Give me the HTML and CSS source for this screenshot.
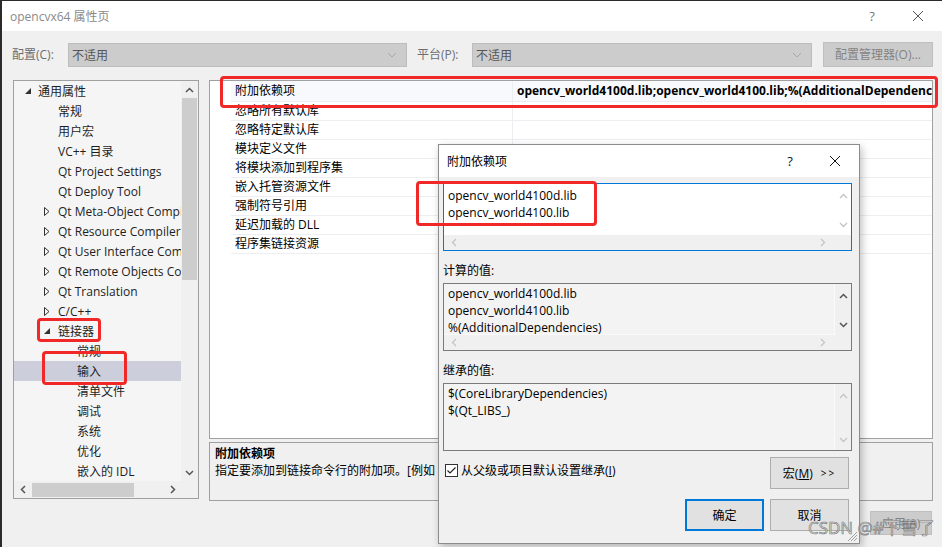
FILE: index.html
```html
<!DOCTYPE html>
<html lang="zh-CN">
<head>
  <meta charset="UTF-8">
  <title>opencvx64 属性页</title>
  <link rel="stylesheet" href="styles.css">
</head>
<body>
  <div class="window">
    <div class="titlebar">
      <span class="title">opencvx64 属性页</span>
      <span class="cap-btn help">?</span>
      <span class="cap-btn close">
        <svg width="12" height="12" viewBox="0 0 12 12"><path d="M1 1L11 11M11 1L1 11" stroke="#555" stroke-width="1"/></svg>
      </span>
    </div>

    <!-- configuration / platform row -->
    <div class="config-row">
      <span class="cfg-label">配置(C):</span>
      <div class="combo combo-cfg">
        <span>不适用</span>
        <svg class="combo-arrow" width="10" height="6" viewBox="0 0 10 6"><path d="M1 1L5 5L9 1" fill="none" stroke="#a8a8a8"/></svg>
      </div>
      <span class="cfg-label plat">平台(P):</span>
      <div class="combo combo-plat">
        <span>不适用</span>
        <svg class="combo-arrow" width="10" height="6" viewBox="0 0 10 6"><path d="M1 1L5 5L9 1" fill="none" stroke="#a8a8a8"/></svg>
      </div>
      <button class="btn btn-disabled cfg-mgr">配置管理器(O)...</button>
    </div>

    <div class="main">
      <!-- category tree -->
      <div class="tree">
        <div class="tree-items">
          <div class="node l0"><span class="exp"><svg width="6" height="6" viewBox="0 0 6 6"><path d="M6 0V6H0Z" fill="#333"/></svg></span><span class="label">通用属性</span></div>
          <div class="node l1"><span class="exp"></span><span class="label">常规</span></div>
          <div class="node l1"><span class="exp"></span><span class="label">用户宏</span></div>
          <div class="node l1"><span class="exp"></span><span class="label">VC++ 目录</span></div>
          <div class="node l1"><span class="exp"></span><span class="label">Qt Project Settings</span></div>
          <div class="node l1"><span class="exp"></span><span class="label">Qt Deploy Tool</span></div>
          <div class="node l1"><span class="exp"><svg width="6" height="9" viewBox="0 0 6 9"><path d="M0.5 0.5V8.5L5 4.5Z" fill="none" stroke="#333"/></svg></span><span class="label">Qt Meta-Object Compiler</span></div>
          <div class="node l1"><span class="exp"><svg width="6" height="9" viewBox="0 0 6 9"><path d="M0.5 0.5V8.5L5 4.5Z" fill="none" stroke="#333"/></svg></span><span class="label">Qt Resource Compiler</span></div>
          <div class="node l1"><span class="exp"><svg width="6" height="9" viewBox="0 0 6 9"><path d="M0.5 0.5V8.5L5 4.5Z" fill="none" stroke="#333"/></svg></span><span class="label">Qt User Interface Compiler</span></div>
          <div class="node l1"><span class="exp"><svg width="6" height="9" viewBox="0 0 6 9"><path d="M0.5 0.5V8.5L5 4.5Z" fill="none" stroke="#333"/></svg></span><span class="label">Qt Remote Objects Compiler</span></div>
          <div class="node l1"><span class="exp"><svg width="6" height="9" viewBox="0 0 6 9"><path d="M0.5 0.5V8.5L5 4.5Z" fill="none" stroke="#333"/></svg></span><span class="label">Qt Translation</span></div>
          <div class="node l1"><span class="exp"><svg width="6" height="9" viewBox="0 0 6 9"><path d="M0.5 0.5V8.5L5 4.5Z" fill="none" stroke="#333"/></svg></span><span class="label">C/C++</span></div>
          <div class="node l1"><span class="exp"><svg width="6" height="6" viewBox="0 0 6 6"><path d="M6 0V6H0Z" fill="#333"/></svg></span><span class="label">链接器</span></div>
          <div class="node l2"><span class="exp"></span><span class="label">常规</span></div>
          <div class="node l2 selected"><span class="exp"></span><span class="label">输入</span></div>
          <div class="node l2"><span class="exp"></span><span class="label">清单文件</span></div>
          <div class="node l2"><span class="exp"></span><span class="label">调试</span></div>
          <div class="node l2"><span class="exp"></span><span class="label">系统</span></div>
          <div class="node l2"><span class="exp"></span><span class="label">优化</span></div>
          <div class="node l2"><span class="exp"></span><span class="label">嵌入的 IDL</span></div>
        </div>
        <div class="vscroll">
          <div class="sb-btn"><svg width="9" height="6" viewBox="0 0 9 6"><path d="M1 5L4.5 1.5L8 5" fill="none" stroke="#555" stroke-width="1.5"/></svg></div>
          <div class="v-thumb"></div>
          <div class="sb-fill"></div>
          <div class="sb-btn"><svg width="9" height="6" viewBox="0 0 9 6"><path d="M1 1L4.5 4.5L8 1" fill="none" stroke="#555" stroke-width="1.5"/></svg></div>
        </div>
        <div class="hscroll">
          <div class="sb-btn"><svg width="6" height="9" viewBox="0 0 6 9"><path d="M5 1L1.5 4.5L5 8" fill="none" stroke="#555" stroke-width="1.5"/></svg></div>
          <div class="h-thumb"></div>
          <div class="sb-fill"></div>
          <div class="sb-btn"><svg width="6" height="9" viewBox="0 0 6 9"><path d="M1 1L4.5 4.5L1 8" fill="none" stroke="#555" stroke-width="1.5"/></svg></div>
        </div>
        <div class="corner"></div>
      </div>

      <div class="right-col">
        <!-- property grid -->
        <div class="propgrid">
          <div class="pg-row first">
            <div class="pg-name">附加依赖项</div>
            <div class="pg-val strong">opencv_world4100d.lib;opencv_world4100.lib;%(AdditionalDependencies)</div>
          </div>
          <div class="pg-row"><div class="pg-name">忽略所有默认库</div><div class="pg-val"></div></div>
          <div class="pg-row"><div class="pg-name">忽略特定默认库</div><div class="pg-val"></div></div>
          <div class="pg-row"><div class="pg-name">模块定义文件</div><div class="pg-val"></div></div>
          <div class="pg-row"><div class="pg-name">将模块添加到程序集</div><div class="pg-val"></div></div>
          <div class="pg-row"><div class="pg-name">嵌入托管资源文件</div><div class="pg-val"></div></div>
          <div class="pg-row"><div class="pg-name">强制符号引用</div><div class="pg-val"></div></div>
          <div class="pg-row"><div class="pg-name">延迟加载的 DLL</div><div class="pg-val"></div></div>
          <div class="pg-row"><div class="pg-name">程序集链接资源</div><div class="pg-val"></div></div>
        </div>
        <div class="desc">
          <div class="desc-title">附加依赖项</div>
          <div class="desc-text">指定要添加到链接命令行的附加项。[例如 kernel32.lib]</div>
        </div>
      </div>
    </div>

    <div class="footer">
      <button class="btn btn-disabled apply">应用(A)</button>
    </div>
  </div>

  <!-- edit dialog -->
  <div class="dialog">
    <div class="dlg-title">
      <span class="title-text">附加依赖项</span>
      <span class="cap-btn help dark">?</span>
      <span class="cap-btn close">
        <svg width="12" height="12" viewBox="0 0 12 12"><path d="M1 1L11 11M11 1L1 11" stroke="#111" stroke-width="1"/></svg>
      </span>
    </div>
    <div class="dlg-body">
      <div class="tbox focus">
        <div class="tb-text">
          <div>opencv_world4100d.lib</div>
          <div>opencv_world4100.lib</div>
        </div>
        <div class="tb-vs">
          <svg width="9" height="6" viewBox="0 0 9 6"><path d="M1 5L4.5 1.5L8 5" fill="none" stroke="#c4c4c4" stroke-width="1.3"/></svg>
          <svg width="9" height="6" viewBox="0 0 9 6"><path d="M1 1L4.5 4.5L8 1" fill="none" stroke="#c4c4c4" stroke-width="1.3"/></svg>
        </div>
        <div class="tb-hs">
          <svg width="6" height="9" viewBox="0 0 6 9"><path d="M5 1L1.5 4.5L5 8" fill="none" stroke="#c4c4c4" stroke-width="1.3"/></svg>
          <svg width="6" height="9" viewBox="0 0 6 9"><path d="M1 1L4.5 4.5L1 8" fill="none" stroke="#c4c4c4" stroke-width="1.3"/></svg>
        </div>
      </div>

      <div class="sec-label">计算的值:</div>
      <div class="tbox readonly">
        <div class="tb-text">
          <div>opencv_world4100d.lib</div>
          <div>opencv_world4100.lib</div>
          <div>%(AdditionalDependencies)</div>
        </div>
        <div class="tb-vs">
          <svg width="9" height="6" viewBox="0 0 9 6"><path d="M1 5L4.5 1.5L8 5" fill="none" stroke="#555" stroke-width="1.5"/></svg>
          <svg width="9" height="6" viewBox="0 0 9 6"><path d="M1 1L4.5 4.5L8 1" fill="none" stroke="#555" stroke-width="1.5"/></svg>
        </div>
        <div class="tb-hs">
          <svg width="6" height="9" viewBox="0 0 6 9"><path d="M5 1L1.5 4.5L5 8" fill="none" stroke="#c4c4c4" stroke-width="1.3"/></svg>
          <svg width="6" height="9" viewBox="0 0 6 9"><path d="M1 1L4.5 4.5L1 8" fill="none" stroke="#c4c4c4" stroke-width="1.3"/></svg>
        </div>
      </div>

      <div class="sec-label">继承的值:</div>
      <div class="tbox readonly no-hs">
        <div class="tb-text">
          <div>$(CoreLibraryDependencies)</div>
          <div>$(Qt_LIBS_)</div>
        </div>
        <div class="tb-vs">
          <svg width="9" height="6" viewBox="0 0 9 6"><path d="M1 5L4.5 1.5L8 5" fill="none" stroke="#c4c4c4" stroke-width="1.3"/></svg>
          <svg width="9" height="6" viewBox="0 0 9 6"><path d="M1 1L4.5 4.5L8 1" fill="none" stroke="#c4c4c4" stroke-width="1.3"/></svg>
        </div>
      </div>

      <div class="opt-row">
        <label class="check">
          <svg width="13" height="13" viewBox="0 0 13 13"><rect x="0.5" y="0.5" width="12" height="12" fill="#fff" stroke="#333"/><path d="M2.5 6.5L5 9L10.5 3.5" fill="none" stroke="#222" stroke-width="1.2"/></svg>
          <span>从父级或项目默认设置继承(<u>I</u>)</span>
        </label>
        <button class="btn macro">宏(<u>M</u>)<span class="gt">&gt;&gt;</span></button>
      </div>

      <div class="btn-row">
        <button class="btn ok">确定</button>
        <button class="btn">取消</button>
      </div>
    </div>
    <svg class="grip" width="10" height="10" viewBox="0 0 10 10"><path d="M9 3L3 9M9 6L6 9M9 0L0 9" stroke="#a0a0a0" stroke-width="1"/></svg>
  </div>

  <!-- annotation marks -->
  <div class="mark mark-row"></div>
  <div class="mark mark-linker"></div>
  <div class="mark mark-input"></div>
  <div class="mark mark-libs"></div>

  <div class="watermark">CSDN @#下雪了</div>
</body>
</html>
```

FILE: styles.css
```css
/* Base */
* {
  box-sizing: border-box;
}

html, body {
  margin: 0;
}

body {
  position: relative;
  width: 942px;
  height: 547px;
  overflow: hidden;
  background: #2b2b2b;
  font-family: "Open Sans", "Noto Sans CJK SC", sans-serif;
  font-size: 12px;
  line-height: 17px;
  color: #000;
}

button {
  font: inherit;
  color: inherit;
}

.window {
  display: flex;
  flex-direction: column;
  height: 546px;
  margin: 1px 0 0 2px;
  background: #f0f0f0;
}

/* Title bar */
.titlebar {
  display: flex;
  align-items: center;
  height: 30px;
  background: #fff;
}

.title {
  padding-left: 8px;
  color: #8a8a8a;
}

.cap-btn {
  display: flex;
  align-items: center;
  justify-content: center;
  width: 46px;
  height: 30px;
}

.cap-btn.help {
  margin-left: auto;
  color: #777;
  font-size: 13px;
}

.cap-btn.help.dark {
  color: #111;
}

.cap-btn.close {
  margin-right: 1px;
}

/* Config row */
.config-row {
  display: flex;
  align-items: flex-start;
  height: 49px;
  padding: 12px 0 0 10px;
}

.cfg-label {
  width: 56px;
  line-height: 24px;
  color: #6d6d6d;
}

.cfg-label.plat {
  width: 55px;
  margin-left: 10px;
}

.combo {
  display: flex;
  align-items: center;
  height: 24px;
  padding: 0 9px 0 3px;
  background: #cccccc;
  border: 1px solid #bdbdbd;
  color: #555;
}

.combo span {
  flex: 1;
}

.combo-cfg {
  width: 339px;
}

.combo-plat {
  width: 340px;
}

.btn {
  display: flex;
  align-items: center;
  justify-content: center;
  padding: 0;
  background: #e1e1e1;
  border: 1px solid #adadad;
  cursor: default;
}

.btn-disabled {
  background: #cccccc;
  border-color: #bfbfbf;
  color: #838383;
}

.cfg-mgr {
  width: 110px;
  height: 25px;
  margin: -1px 0 0 11px;
}

/* Main area */
.main {
  display: flex;
  gap: 10px;
  padding-left: 11px;
}

/* Tree */
.tree {
  display: grid;
  grid-template-columns: 167px 17px;
  grid-template-rows: 400px 17px;
  width: 186px;
  height: 419px;
  border: 1px solid #a0a0a0;
  background: #f5f5f5;
}

.tree-items {
  overflow: hidden;
  white-space: nowrap;
}

.node {
  display: flex;
  align-items: center;
  height: 20px;
  color: #1e1e1e;
}

.node.l1 {
  padding-left: 20px;
}

.node.l2 {
  padding-left: 39px;
}

.node.selected {
  background: #cccedb;
}

.exp {
  display: flex;
  flex: 0 0 24px;
  align-items: center;
  height: 20px;
  padding-left: 11px;
}

.node.l1 .exp {
  padding-left: 10px;
}

.label {
  flex: 0 0 auto;
}

.vscroll,
.hscroll {
  display: flex;
  background: #f0f0f0;
}

.vscroll {
  flex-direction: column;
}

.sb-btn {
  display: flex;
  align-items: center;
  justify-content: center;
  flex: 0 0 17px;
}

.sb-fill {
  flex: 1;
}

.v-thumb {
  height: 182px;
  margin: 0 1px;
  background: #cdcdcd;
}

.h-thumb {
  width: 102px;
  margin: 2px 0 1px 1px;
  background: #cdcdcd;
}

.corner {
  background: #f0f0f0;
}

/* Property grid */
.right-col {
  display: flex;
  flex-direction: column;
  gap: 3px;
  width: 724px;
}

.propgrid {
  height: 359px;
  padding-left: 21px;
  background: #fff;
  border: 1px solid #a0a0a0;
  overflow: hidden;
}

.pg-row {
  display: grid;
  grid-template-columns: 281px 1fr;
  height: 19px;
  border-bottom: 1px solid #eceef2;
  line-height: 18px;
}

.pg-row.first {
  height: 21px;
  line-height: 20px;
  background: #f8f9fc;
}

.pg-name {
  padding-left: 4px;
  white-space: nowrap;
}

.pg-val {
  padding-left: 4px;
  border-left: 1px solid #eceef2;
  white-space: nowrap;
  overflow: hidden;
}

.pg-val.strong {
  font-weight: 700;
}

.desc {
  height: 59px;
  padding: 2px 5px;
  border: 1px solid #a0a0a0;
  background: #f0f0f0;
  white-space: nowrap;
  overflow: hidden;
}

.desc-title {
  font-weight: 700;
}

/* Footer */
.footer {
  display: flex;
  padding-top: 10px;
}

.apply {
  width: 62px;
  height: 24px;
  margin: 0 10px 0 auto;
}

/* Dialog */
.dialog {
  position: absolute;
  left: 438px;
  top: 144px;
  width: 422px;
  height: 400px;
  background: #f0f0f0;
  border: 1px solid #8c8c8c;
  box-shadow: 2px 3px 8px rgba(0, 0, 0, 0.25);
}

.dlg-title {
  display: flex;
  align-items: center;
  height: 32px;
  background: #fff;
}

.title-text {
  padding-left: 8px;
}

.dlg-title .cap-btn {
  height: 32px;
}

.dlg-title .cap-btn.help {
  width: 44px;
}

.dlg-body {
  padding: 6px 7px 0 4px;
}

.tbox {
  display: grid;
  grid-template-columns: 1fr 16px;
  grid-template-rows: 51px 15px;
  height: 68px;
  border: 1px solid #7a7a7a;
  background: #f0f0f0;
}

.tbox.focus {
  border-color: #0078d7;
  background: #fff;
}

.tbox.no-hs {
  grid-template-rows: 66px;
}

.tb-text {
  padding: 3px 0 0 4px;
  overflow: hidden;
  white-space: nowrap;
}

.tbox.readonly .tb-text {
  padding-top: 1px;
  border-right: 1px solid #fafafa;
  border-bottom: 1px solid #fafafa;
  background: #f3f3f3;
}

.tbox.no-hs .tb-text {
  border-bottom: none;
}

.tb-vs {
  display: flex;
  flex-direction: column;
  align-items: center;
  justify-content: space-between;
  padding: 9px 0 7px;
}

.tb-hs {
  grid-column: 1 / 3;
  display: flex;
  align-items: center;
  justify-content: space-between;
  padding: 0 25px 0 7px;
  background: #f0f0f0;
}

.sec-label {
  margin: 11px 0 3px;
  line-height: 18px;
}

.opt-row {
  display: flex;
  align-items: center;
  justify-content: space-between;
  margin-top: 6px;
  padding-left: 2px;
}

.check {
  display: flex;
  align-items: center;
  gap: 3px;
  margin-top: -5px;
}

.check u {
  text-underline-offset: 1px;
}

.macro {
  width: 79px;
  height: 32px;
  margin-right: 3px;
}

.gt {
  margin-left: 8px;
  font-size: 10px;
  letter-spacing: 2px;
}

.btn-row {
  display: flex;
  justify-content: flex-end;
  gap: 6px;
  margin: 10px 3px 0 0;
}

.btn-row .btn {
  width: 79px;
  height: 32px;
}

.btn.ok {
  border: 2px solid #0078d7;
}

.grip {
  position: absolute;
  right: 1px;
  bottom: 1px;
}

/* Annotation marks */
.mark {
  position: absolute;
  border: 3px solid #f02828;
  border-radius: 4px;
}

.mark-row {
  left: 220px;
  top: 76px;
  width: 718px;
  height: 32px;
}

.mark-linker {
  left: 37px;
  top: 318px;
  width: 64px;
  height: 24px;
}

.mark-input {
  left: 42px;
  top: 351px;
  width: 85px;
  height: 34px;
}

.mark-libs {
  left: 416px;
  top: 181px;
  width: 181px;
  height: 45px;
}

.watermark {
  position: absolute;
  left: 808px;
  top: 516px;
  font-size: 17px;
  line-height: 24px;
  color: rgba(228, 228, 228, 0.85);
  -webkit-text-stroke: 0.7px rgba(95, 95, 95, 0.75);
  white-space: nowrap;
}
```
